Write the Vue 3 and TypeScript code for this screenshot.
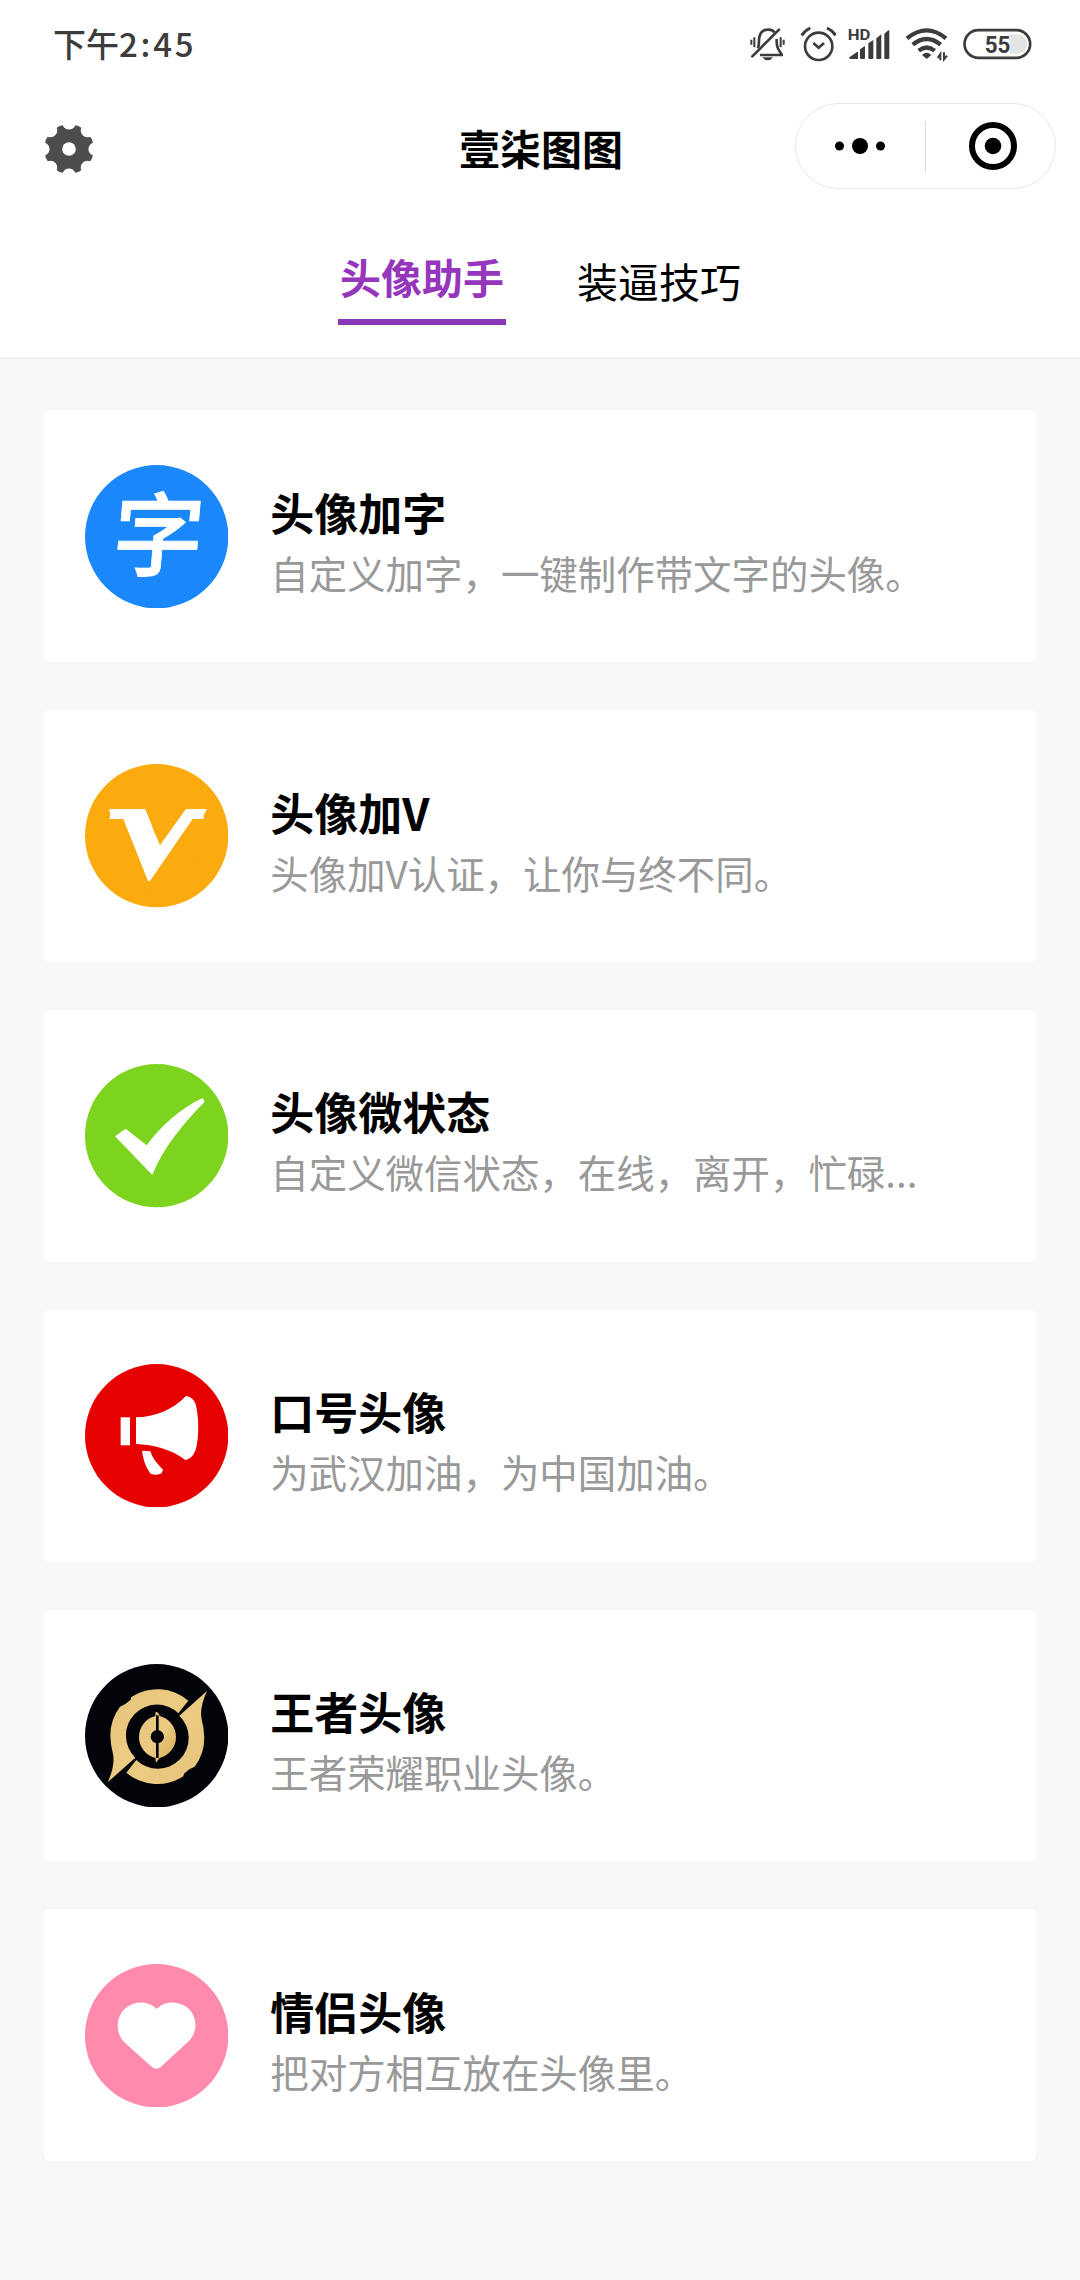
<script setup lang="ts">
interface Entry {
  icon: 'text' | 'vip' | 'check' | 'horn' | 'game' | 'heart'
  color: string
  title: string
  desc: string
}

const entries: Entry[] = [
  { icon: 'text', color: '#1a88fb', title: '头像加字', desc: '自定义加字，一键制作带文字的头像。' },
  { icon: 'vip', color: '#fbab0e', title: '头像加V', desc: '头像加V认证，让你与终不同。' },
  { icon: 'check', color: '#7cd41f', title: '头像微状态', desc: '自定义微信状态，在线，离开，忙碌...' },
  { icon: 'horn', color: '#e60000', title: '口号头像', desc: '为武汉加油，为中国加油。' },
  { icon: 'game', color: '#02040a', title: '王者头像', desc: '王者荣耀职业头像。' },
  { icon: 'heart', color: '#ff8aab', title: '情侣头像', desc: '把对方相互放在头像里。' },
]

// Eight-tooth gear outline, centred on the origin
function gearPath(): string {
  const at = (deg: number, r: number) => {
    const a = (deg * Math.PI) / 180
    return `${(r * Math.sin(a)).toFixed(2)},${(-r * Math.cos(a)).toFixed(2)}`
  }
  let d = `M${at(-15, 24.6)}`
  for (let i = 0; i < 8; i++) {
    const n = i * 45
    d += `C${at(n - 12, 18.4)} ${at(n + 12, 18.4)} ${at(n + 15, 24.6)}Q${at(n + 22.5, 25.4)} ${at(n + 30, 24.6)}`
  }
  return d + 'Z'
}
const gear = gearPath()

// One half of the ring emblem; the other half is the same shape turned by 180 degrees
const blade =
  'M355 150L325 188A91 91 0 0 0 196 321L113 395Q136 345 129 310Q122 285 121 255A143 143 0 0 1 150 168L166 160L182 147L184 139A143 143 0 0 1 355 150Z'
</script>

<template>
  <div class="page">
    <header class="top">
      <div class="status">
        <span class="time">下午<span class="digits">2:45</span></span>
        <div class="icons">
          <svg class="bell" viewBox="58 50 108 105" fill="none" stroke="#3c3c3c" stroke-width="8">
            <path d="M82 114Q85 104 85 92Q85 59 110 58Q124 57 132 66" />
            <path d="M138 86C137 108 142 118 153 132V134H88" />
            <path d="M65 138L145 58" stroke-linecap="round" />
            <path d="M95 141H127Q121 150 111 150Q101 150 95 141Z" fill="#3c3c3c" stroke="none" />
            <path d="M62 88V103M71 81V111M150 81V111M159 88V103" stroke-width="6" />
          </svg>
          <svg class="alarm" viewBox="208 48 108 108" fill="none" stroke="#3c3c3c" stroke-width="8">
            <circle cx="264" cy="109" r="41" />
            <path d="M248 99L264 113L280 99" stroke-width="8" />
            <path d="M213 76Q222 62 239 54M289 54Q306 62 315 76" stroke-width="9" />
          </svg>
          <svg class="signal" viewBox="350 48 132 100" fill="#3c3c3c">
            <text x="352" y="86" font-size="43" font-weight="700" textLength="68" lengthAdjust="spacingAndGlyphs">HD</text>
            <path d="M357 139L380 123Q383 121 383 126V144H360Q355 144 357 139Z" />
            <path d="M389 115L404 105V141Q404 144 401 144H392Q389 144 389 141Z" />
            <path d="M414 97L429 87V141Q429 144 426 144H417Q414 144 414 141Z" />
            <path d="M438 82L453 70V141Q453 144 450 144H441Q438 144 438 141Z" />
            <path d="M462 68L474 58Q477 57 477 61V141Q477 144 474 144H465Q462 144 462 141Z" />
          </svg>
          <svg class="wifi" viewBox="524 50 132 108" fill="none" stroke="#3c3c3c" stroke-width="12.500">
            <path d="M530 87Q589 39 647 87" />
            <path d="M547 106Q589 72 631 106" />
            <path d="M565 124Q589 105 613 124" />
            <path d="M575 137Q589 124 603 137L589 149Z" fill="#3c3c3c" stroke="none" />
            <path d="M630 153V134L622 146M641 129V150L650 139" stroke-width="6" />
          </svg>
          <svg class="battery" viewBox="698 54 206 96">
            <path d="M839 73H862A29 29 0 0 1 862 131H839Z" fill="#e4e4e4" />
            <rect x="702.5" y="60.500" width="197" height="83" rx="41.500" fill="none" stroke="#3c3c3c" stroke-width="8" />
            <text x="763" y="128" font-size="72" font-weight="700" textLength="77" lengthAdjust="spacingAndGlyphs" fill="#3c3c3c">55</text>
          </svg>
        </div>
      </div>

      <div class="nav">
        <svg class="gear" viewBox="-25 -25 50 50">
          <path :d="gear" fill="#4d4d4d" />
          <circle r="6.800" fill="#fff" />
        </svg>
        <h1>壹柒图图</h1>
        <div class="capsule">
          <svg class="dots" viewBox="0 0 52 18">
            <circle cx="5.500" cy="9" r="4.500" />
            <circle cx="26" cy="9" r="8" />
            <circle cx="46.500" cy="9" r="4.500" />
          </svg>
          <i class="divider"></i>
          <svg class="target" viewBox="0 0 48 48">
            <circle cx="24" cy="24" r="21" fill="none" stroke="#000" stroke-width="6" />
            <circle cx="24" cy="24" r="8.300" />
          </svg>
        </div>
      </div>

      <nav class="tabs">
        <a class="tab active">头像助手</a>
        <a class="tab">装逼技巧</a>
      </nav>
    </header>

    <main class="list">
      <section v-for="e in entries" :key="e.icon" class="card">
        <svg class="badge" viewBox="75 71 430 430">
          <circle cx="290" cy="286" r="215" :fill="e.color" />
          <text
            v-if="e.icon === 'text'"
            class="zi"
            transform="translate(287 384) skewX(-5)"
            text-anchor="middle"
            font-size="274"
            fill="#fff"
          >字</text>
          <template v-else-if="e.icon === 'vip'">
            <text
              class="vee"
              transform="translate(164 402) skewX(-7)"
              font-size="232"
              textLength="212"
              lengthAdjust="spacingAndGlyphs"
              fill="#fff"
            >V</text>
            <path d="M155 207H256V236H148ZM375 207H433L431 236H366Z" fill="#fff" />
            <path d="M256 190V207L300 315L377 207V190Z" :fill="e.color" />
            <path d="M140 236H190L264 422H270L398 236H440L400 400L300 470L200 435L150 330Z" :fill="e.color" />
          </template>
          <path
            v-else-if="e.icon === 'check'"
            d="M165 288L197 265L260 315C300 260 360 205 428 173L434 184C370 250 310 320 277 404Z"
            fill="#fff"
          />
          <g v-else-if="e.icon === 'horn'" fill="#fff">
            <rect x="182" y="231" width="28" height="84" />
            <path d="M228 231C285 231 340 207 378 167C395 170 403 178 408 195C417 235 417 290 408 325C402 345 393 354 376 359C335 327 280 313 228 311Z" />
            <path d="M246 331L271 333C277 352 290 370 309 388L305 399C295 404 285 405 273 401C258 382 250 360 246 331Z" />
          </g>
          <g v-else-if="e.icon === 'game'" transform="translate(30 31)">
            <defs>
              <linearGradient id="gold" x1="0" y1="0" x2="1" y2="1">
                <stop offset="0" stop-color="#e6c278" />
                <stop offset="0.500" stop-color="#eccb84" />
                <stop offset="1" stop-color="#d6aa54" />
              </linearGradient>
            </defs>
            <g fill="url(#gold)">
              <path :d="blade" />
              <path :d="blade" transform="rotate(180 262 258)" />
              <path d="M257 183Q266 184 269 196A65 65 0 0 1 269 322L258 336Q257 330 256 322A65 65 0 0 1 256 196Z" />
            </g>
            <path d="M262 194V322" stroke="#02040a" stroke-width="8" />
            <circle cx="262" cy="258" r="20" fill="#02040a" />
          </g>
          <path
            v-else
            d="M290 206C313 180 355 181 381 201C412 226 416 272 386 303L303 379Q289 391 275 379L196 309C165 280 165 229 198 202C226 180 268 181 290 206Z"
            fill="#fff"
          />
        </svg>
        <div class="body">
          <h2>{{ e.title }}</h2>
          <p>{{ e.desc }}</p>
        </div>
      </section>
    </main>
  </div>
</template>

<style>
body {
  margin: 0;
  background: #f8f8f8;
}
</style>

<style scoped>
.page {
  width: 1080px;
  height: 2280px;
  overflow: hidden;
  background: #f8f8f8;
  color: #000;
  font-family: 'Noto Sans CJK SC', sans-serif;
}
svg {
  display: block;
  flex: none;
}
h1,
h2,
p {
  margin: 0;
}
.top {
  box-sizing: border-box;
  height: 359px;
  background: #fff;
  border-bottom: 2px solid #f1f1f1;
}
.status {
  box-sizing: border-box;
  height: 88px;
  display: flex;
  justify-content: space-between;
  align-items: center;
  padding: 0 48px 0 53px;
}
.time {
  font-size: 33px;
  line-height: 48px;
  font-weight: 500;
  color: #3c3c3c;
  margin-top: -2px;
}
.digits {
  letter-spacing: 2.800px;
}
.icons {
  display: flex;
  align-items: center;
}
.bell { width: 36px; height: 35px; }
.alarm { width: 36px; height: 36px; margin-left: 14px; }
.signal { width: 44px; height: 33.300px; margin-left: 11.300px; font-family: Roboto, sans-serif; }
.wifi { width: 44px; height: 36px; margin-left: 14px; }
.battery { width: 68.700px; height: 32px; margin-left: 14px; font-family: Roboto, sans-serif; }
.nav {
  box-sizing: border-box;
  height: 116px;
  display: grid;
  grid-template-columns: 1fr auto 1fr;
  align-items: center;
  padding: 0 24px 0 44px;
}
.gear {
  width: 50px;
  height: 50px;
  margin-top: 5px;
}
h1 {
  font-size: 41px;
  line-height: 60px;
  font-weight: 700;
  margin: 2px 18px 0 0;
}
.capsule {
  justify-self: end;
  box-sizing: border-box;
  width: 261px;
  height: 86px;
  border: 1px solid #e8e8e8;
  border-radius: 43px;
  display: flex;
  align-items: center;
}
.dots { width: 52px; height: 18px; margin-left: 38px; }
.divider { width: 1px; height: 51px; margin-left: 39px; background: #dcdcdc; }
.target { width: 48px; height: 48px; margin-left: 43px; }
.tabs {
  display: flex;
  justify-content: center;
  gap: 69px;
  padding: 40px 0 0 1px;
}
.tab {
  box-sizing: border-box;
  height: 81px;
  padding: 4px 2px 0;
  font-size: 41px;
  line-height: 64px;
}
.tab.active {
  padding-top: 0;
  font-weight: 700;
  color: #9536bd;
  border-bottom: 6px solid #8a38b8;
}
.list {
  display: flex;
  flex-direction: column;
  gap: 48px;
  padding: 51.400px 44px 0;
}
.card {
  height: 251.800px;
  display: flex;
  align-items: center;
  background: #fff;
  border-radius: 6px;
}
.badge {
  width: 143.300px;
  height: 143.300px;
  margin-left: 41px;
}
.zi {
  font-weight: 500;
  stroke: #fff;
  stroke-width: 2px;
}
.vee {
  font-family: 'DejaVu Sans', sans-serif;
  font-weight: 700;
  stroke: #fff;
  stroke-width: 50px;
}
.body {
  margin-left: 42px;
}
h2 {
  font-size: 44px;
  line-height: 60px;
  font-weight: 700;
  margin-top: 11px;
}
p {
  font-size: 38.450px;
  line-height: 60px;
  color: #999;
  white-space: nowrap;
}
</style>
